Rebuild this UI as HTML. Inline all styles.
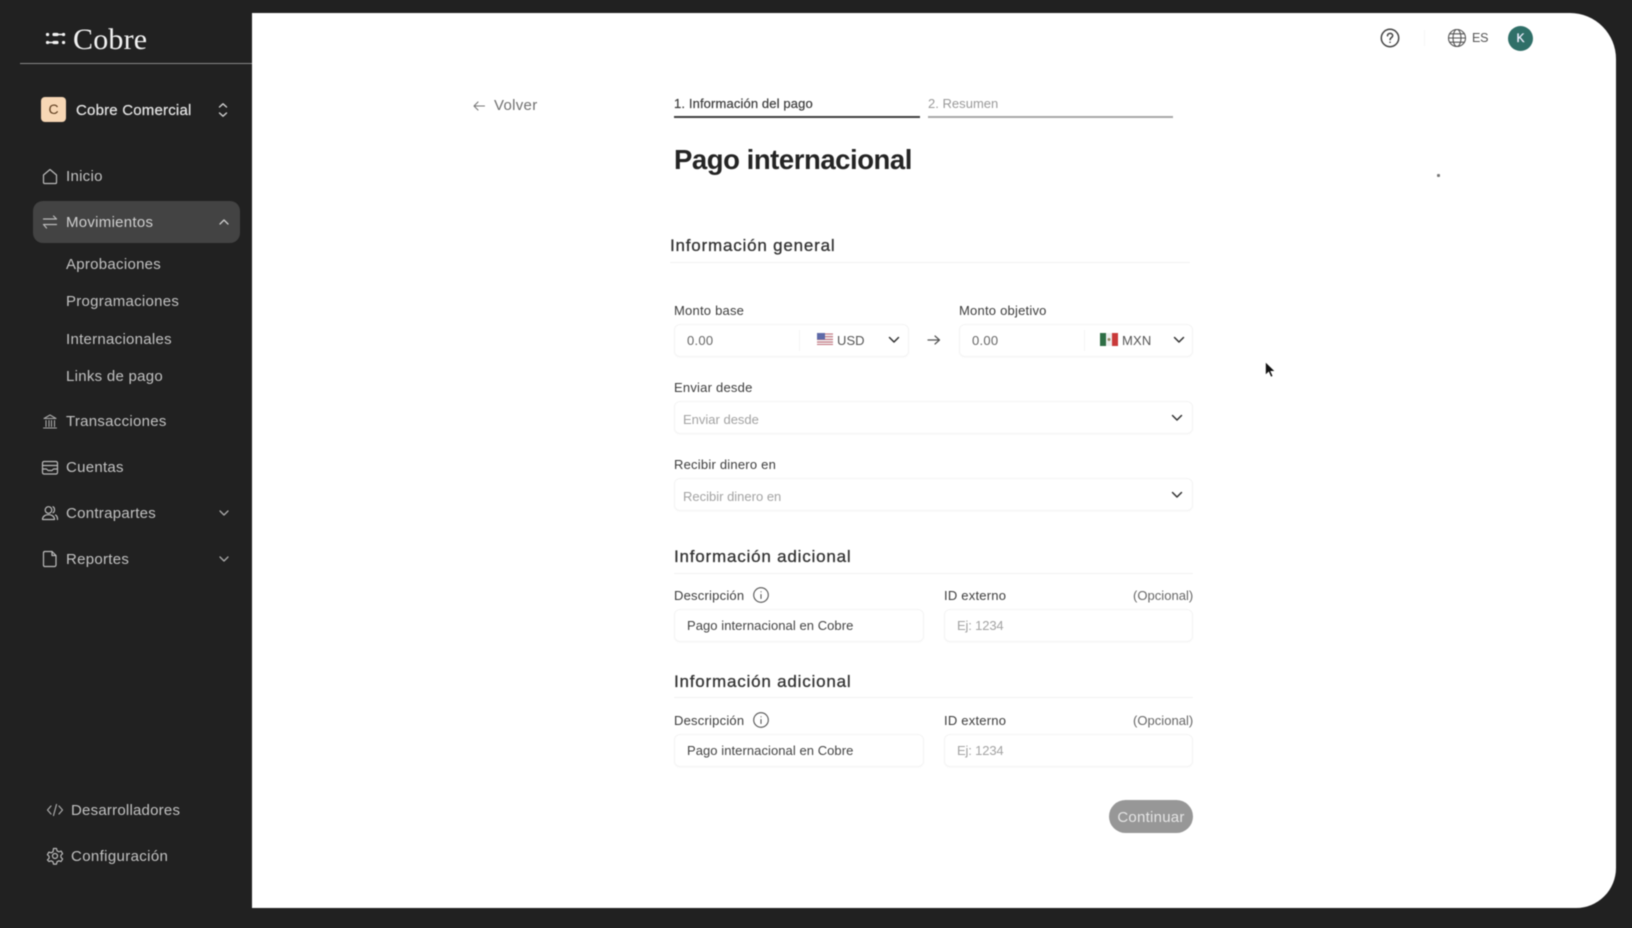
<!DOCTYPE html>
<html lang="es"><head><meta charset="utf-8"><title>Cobre</title>
<style>
html,body{margin:0;padding:0;width:1632px;height:928px;overflow:hidden;background:#212121}
body{position:relative;font-family:"Liberation Sans",sans-serif}
#r{position:absolute;inset:0;filter:blur(.45px)}
.a{position:absolute}
.t{position:absolute;white-space:nowrap;line-height:20px;height:20px;transform:translateY(1px)}
svg{position:absolute;fill:none;stroke-linecap:round;stroke-linejoin:round}
.n{font-size:15px;color:#c2c2c2;letter-spacing:.28px}
.l{font-size:13px;color:#3d3d3d;letter-spacing:.22px}
.i{position:absolute;background:#fff;border:1px solid #f4f4f4;border-radius:6px;box-sizing:border-box;box-shadow:0 1px 2px rgba(0,0,0,.025)}
.h{font-size:17px;color:#333;letter-spacing:.8px;font-weight:400;-webkit-text-stroke:.3px #333}
.hr{position:absolute;height:1px;background:#f2f2f2}
.p{font-size:13px;color:#a3a3a3;letter-spacing:0}
.v{font-size:13px;color:#444;letter-spacing:.06px}
</style></head><body><div id="r">
<div class="a" style="left:252px;top:13px;width:1364px;height:895px;background:#fff;border-radius:0 46px 40px 0"></div>
<div class="a" style="left:20px;top:63px;width:232px;height:1px;background:#8a8a8a"></div>

<svg style="left:45px;top:31px" width="21" height="15" stroke="#f2f2f2" stroke-width="3.200"><path d="M2.500 3.500h.1M9 3.500h3M18.500 3.500h.1M2.500 11.500h.1M9 11.500h3M18.500 11.500h.1"/><path stroke-width="1.500" d="M10 3.500h8M3 11.500h7"/></svg>
<div class="t" style="left:73px;top:24px;height:30px;font:30px/30px 'Liberation Serif',serif;color:#f2f2f2;letter-spacing:.2px">Cobre</div>

<div class="a" style="left:41px;top:97px;width:25px;height:25px;border-radius:4px;background:#f7d7b5;color:#5c3b1c;font-size:14px;line-height:25px;text-align:center">C</div>
<div class="t" style="left:76px;top:100px;font-size:15px;color:#e6e6e6;letter-spacing:.2px;-webkit-text-stroke:.2px #e6e6e6">Cobre Comercial</div>
<svg style="left:216px;top:102px" width="14" height="16" stroke="#ccc" stroke-width="1.400"><path d="M3.500 5L7 1.800 10.500 5M3.500 11L7 14.200 10.500 11"/></svg>

<svg style="left:41px;top:167px" width="18" height="18" stroke="#bbb" stroke-width="1.200"><path d="M2.500 8L9 2.500 15.500 8V15.500a1 1 0 0 1-1 1H3.500a1 1 0 0 1-1-1z"/></svg>
<div class="t n" style="left:66px;top:166px">Inicio</div>

<div class="a" style="left:33px;top:201px;width:207px;height:42px;border-radius:10px;background:#434343"></div>
<svg style="left:41px;top:213px" width="18" height="18" stroke="#bbb" stroke-width="1.200"><path d="M2.500 6H15.500M12.500 3l3 3M15.500 11.500H2.500M5.500 15l-3-3.500"/></svg>
<div class="t n" style="left:66px;top:212px;color:#d0d0d0">Movimientos</div>
<svg style="left:218px;top:217px" width="12" height="10" stroke="#ccc" stroke-width="1.300"><path d="M2 7L6 3 10 7"/></svg>

<div class="t n" style="left:66px;top:254px">Aprobaciones</div>
<div class="t n" style="left:66px;top:291px">Programaciones</div>
<div class="t n" style="left:66px;top:329px">Internacionales</div>
<div class="t n" style="left:66px;top:366px">Links de pago</div>

<svg style="left:41px;top:412px" width="18" height="18" stroke="#aaa" stroke-width="1.100"><path d="M3 6.500L9 3l6 3.500zM5 8.500v6M8 8.500v6M10.500 8.500v6M13.500 8.500v6M2.500 16h13"/></svg>
<div class="t n" style="left:66px;top:411px">Transacciones</div>

<svg style="left:41px;top:459px" width="18" height="18" stroke="#bbb" stroke-width="1.200"><rect x="1.500" y="2.500" width="15" height="12.500" rx="1.500"/><path d="M1.500 6.500H16.500M1.500 10h4l1.500 1.500h4L12.500 10h4"/></svg>
<div class="t n" style="left:66px;top:457px">Cuentas</div>

<svg style="left:41px;top:504px" width="18" height="18" stroke="#bbb" stroke-width="1.200"><circle cx="7.500" cy="6" r="3.300"/><path d="M1.500 15.500c0-3 2.500-4.800 6-4.800s6 1.800 6 4.800zM12 2.800c2 .8 2 5 0 5.900M14.500 11c1.500.8 2 2.500 2 4.500"/></svg>
<div class="t n" style="left:66px;top:503px">Contrapartes</div>
<svg style="left:218px;top:508px" width="12" height="10" stroke="#aaa" stroke-width="1.300"><path d="M2 3L6 7 10 3"/></svg>

<svg style="left:41px;top:549px" width="18" height="20" stroke="#bbb" stroke-width="1.200"><path d="M3.500 2.500H11L15 6.500V16a1.500 1.500 0 0 1-1.500 1.500h-10A1.500 1.500 0 0 1 2.500 16V4a1.500 1.500 0 0 1 1-1.500zM11 2.500V6.500H15"/></svg>
<div class="t n" style="left:66px;top:549px">Reportes</div>
<svg style="left:218px;top:554px" width="12" height="10" stroke="#aaa" stroke-width="1.300"><path d="M2 3L6 7 10 3"/></svg>

<svg style="left:46px;top:801px" width="18" height="18" stroke="#aaa" stroke-width="1.200"><path d="M5 5L1.500 9 5 13M13 5L16.500 9 13 13M10.500 3.500L7.500 14.500"/></svg>
<div class="t n" style="left:71px;top:800px;letter-spacing:.22px">Desarrolladores</div>
<svg style="left:46px;top:847px" width="18" height="18" stroke="#bbb" stroke-width="1.200"><circle cx="9" cy="9" r="2.500"/><path d="M7.500 1.500h3l.5 2.300 1.800 1 2.300-.7 1.500 2.600-1.700 1.600v2l1.700 1.600-1.500 2.600-2.300-.7-1.800 1-.5 2.300h-3l-.5-2.300-1.800-1-2.300.7L1.400 12.900l1.700-1.600v-2L1.400 7.700 2.900 5.100l2.300.7 1.800-1z"/></svg>
<div class="t n" style="left:71px;top:846px;letter-spacing:.36px">Configuración</div>

<svg style="left:1379px;top:27px" width="22" height="22" stroke="#444" stroke-width="1.500"><circle cx="11" cy="11" r="8.700"/><path d="M8.500 8.800c0-3.200 5.200-3.200 5.200-.2 0 2-2.600 2-2.600 4M11 15.300h.1"/></svg>
<div class="a" style="left:1424px;top:30px;width:1px;height:16px;background:#f6f6f6"></div>
<svg style="left:1447px;top:28px" width="20" height="20" stroke="#555" stroke-width="1.100"><circle cx="10" cy="10" r="8.500"/><ellipse cx="10" cy="10" rx="4" ry="8.500"/><path d="M1.500 10h17M2.700 5.800h14.600M2.700 14.200h14.600"/></svg>
<div class="t" style="left:1472px;top:27px;font-size:12.500px;color:#555;letter-spacing:-.2px">ES</div>
<div class="a" style="left:1508px;top:26px;width:25px;height:25px;border-radius:50%;background:#2f6f68;color:#eef;font-size:12px;line-height:25px;text-align:center;font-weight:400;-webkit-text-stroke:.3px #eef">K</div>

<svg style="left:472px;top:99px" width="14" height="14" stroke="#777" stroke-width="1.100"><path d="M12.500 7H2M6 3L2 7l4 4"/></svg>
<div class="t" style="left:494px;top:95px;font-size:15px;color:#6f6f6f;letter-spacing:.3px">Volver</div>

<div class="t" style="left:674px;top:92.500px;font-size:13px;color:#3c3c3c;letter-spacing:.13px;-webkit-text-stroke:.2px #3c3c3c">1. Información del pago</div>
<div class="a" style="left:674px;top:116px;width:246px;height:2px;background:#404040"></div>
<div class="t" style="left:928px;top:92.500px;font-size:13px;color:#9a9a9a;letter-spacing:.02px">2. Resumen</div>
<div class="a" style="left:928px;top:116px;width:245px;height:2px;background:#a8a8a8"></div>

<div class="t" style="left:674px;top:145px;height:30px;line-height:30px;font-size:27.500px;font-weight:700;color:#242424;letter-spacing:-.45px;transform:none">Pago internacional</div>

<div class="t h" style="left:670px;top:235px">Información general</div>
<div class="hr" style="left:670px;top:262px;width:520px"></div>

<div class="t l" style="left:674px;top:299.500px">Monto base</div>
<div class="i" style="left:674px;top:324px;width:235px;height:33px"></div>
<div class="t v" style="left:687px;top:330px;color:#666;letter-spacing:.25px">0.00</div>
<div class="a" style="left:799px;top:330px;width:1px;height:21px;background:#f5f5f5"></div>
<svg style="left:817px;top:333px" width="16" height="12"><rect width="16" height="12" fill="#f2f2f2"/><path stroke="#c4737e" stroke-width="1.100" d="M0 1h16M0 3.700h16M0 6.400h16M0 9.100h16M0 11.500h16"/><rect width="8" height="6.500" fill="#5e6aa8"/></svg>
<div class="t v" style="left:837px;top:330px;color:#555">USD</div>
<svg style="left:887px;top:334px" width="14" height="12" stroke="#333" stroke-width="1.500"><path d="M2.500 3.500L7 8l4.500-4.500"/></svg>

<svg style="left:926px;top:333px" width="16" height="14" stroke="#555" stroke-width="1.200"><path d="M2 7h11.500M9 3l4.500 4L9 11"/></svg>

<div class="t l" style="left:959px;top:299.500px">Monto objetivo</div>
<div class="i" style="left:959px;top:324px;width:234px;height:33px"></div>
<div class="t v" style="left:972px;top:330px;color:#666;letter-spacing:.25px">0.00</div>
<div class="a" style="left:1084px;top:330px;width:1px;height:21px;background:#f5f5f5"></div>
<svg style="left:1100px;top:333px" width="18" height="13"><rect width="6" height="13" fill="#2e6e45"/><rect x="6" width="6" height="13" fill="#eeeeee"/><rect x="12" width="6" height="13" fill="#c93a3a"/><circle cx="9" cy="6.500" r="1.500" fill="#998866"/></svg>
<div class="t v" style="left:1122px;top:330px;color:#555;letter-spacing:.2px">MXN</div>
<svg style="left:1172px;top:334px" width="14" height="12" stroke="#333" stroke-width="1.500"><path d="M2.500 3.500L7 8l4.500-4.500"/></svg>

<div class="t l" style="left:674px;top:376.500px">Enviar desde</div>
<div class="i" style="left:674px;top:401px;width:519px;height:33px"></div>
<div class="t p" style="left:683px;top:409px">Enviar desde</div>
<svg style="left:1170px;top:411.500px" width="14" height="12" stroke="#333" stroke-width="1.500"><path d="M2.500 3.500L7 8l4.500-4.500"/></svg>

<div class="t l" style="left:674px;top:453.500px">Recibir dinero en</div>
<div class="i" style="left:674px;top:478px;width:519px;height:33px"></div>
<div class="t p" style="left:683px;top:486px">Recibir dinero en</div>
<svg style="left:1170px;top:488.500px" width="14" height="12" stroke="#333" stroke-width="1.500"><path d="M2.500 3.500L7 8l4.500-4.500"/></svg>

<div class="t h" style="left:674px;top:546px">Información adicional</div>
<div class="hr" style="left:674px;top:573px;width:519px"></div>
<div class="t l" style="left:674px;top:585px">Descripción</div>
<svg style="left:752px;top:586px" width="18" height="18" stroke="#555" stroke-width="1.100"><circle cx="9" cy="9" r="7.300"/><path d="M9 8.500v4M9 5.800h.1"/></svg>
<div class="t l" style="left:944px;top:585px">ID externo</div>
<div class="t l" style="left:1133px;top:585px;color:#666;letter-spacing:.03px">(Opcional)</div>
<div class="i" style="left:674px;top:609px;width:250px;height:33px"></div>
<div class="t v" style="left:687px;top:615px">Pago internacional en Cobre</div>
<div class="i" style="left:944px;top:609px;width:249px;height:33px"></div>
<div class="t p" style="left:957px;top:615px;letter-spacing:-.15px">Ej: 1234</div>

<div class="t h" style="left:674px;top:671px">Información adicional</div>
<div class="hr" style="left:674px;top:697px;width:519px"></div>
<div class="t l" style="left:674px;top:709.500px">Descripción</div>
<svg style="left:752px;top:711px" width="18" height="18" stroke="#555" stroke-width="1.100"><circle cx="9" cy="9" r="7.300"/><path d="M9 8.500v4M9 5.800h.1"/></svg>
<div class="t l" style="left:944px;top:709.500px">ID externo</div>
<div class="t l" style="left:1133px;top:709.500px;color:#666;letter-spacing:.03px">(Opcional)</div>
<div class="i" style="left:674px;top:734px;width:250px;height:33px"></div>
<div class="t v" style="left:687px;top:740px">Pago internacional en Cobre</div>
<div class="i" style="left:944px;top:734px;width:249px;height:33px"></div>
<div class="t p" style="left:957px;top:740px;letter-spacing:-.15px">Ej: 1234</div>

<div class="a" style="left:1109px;top:800px;width:84px;height:33px;border-radius:17px;background:#979797;color:#e4e4e4;font-size:15px;line-height:35px;text-align:center;letter-spacing:.25px">Continuar</div>

<svg style="left:1264px;top:361px" width="14" height="18"><path fill="#111" stroke="#fff" stroke-width=".6" d="M1.500 1v13l3.200-3 2.200 5 2-.9-2.200-4.800H11z"/></svg>
<div class="a" style="left:1437px;top:174px;width:3px;height:3px;background:#777;border-radius:1px"></div>
</div></body></html>
